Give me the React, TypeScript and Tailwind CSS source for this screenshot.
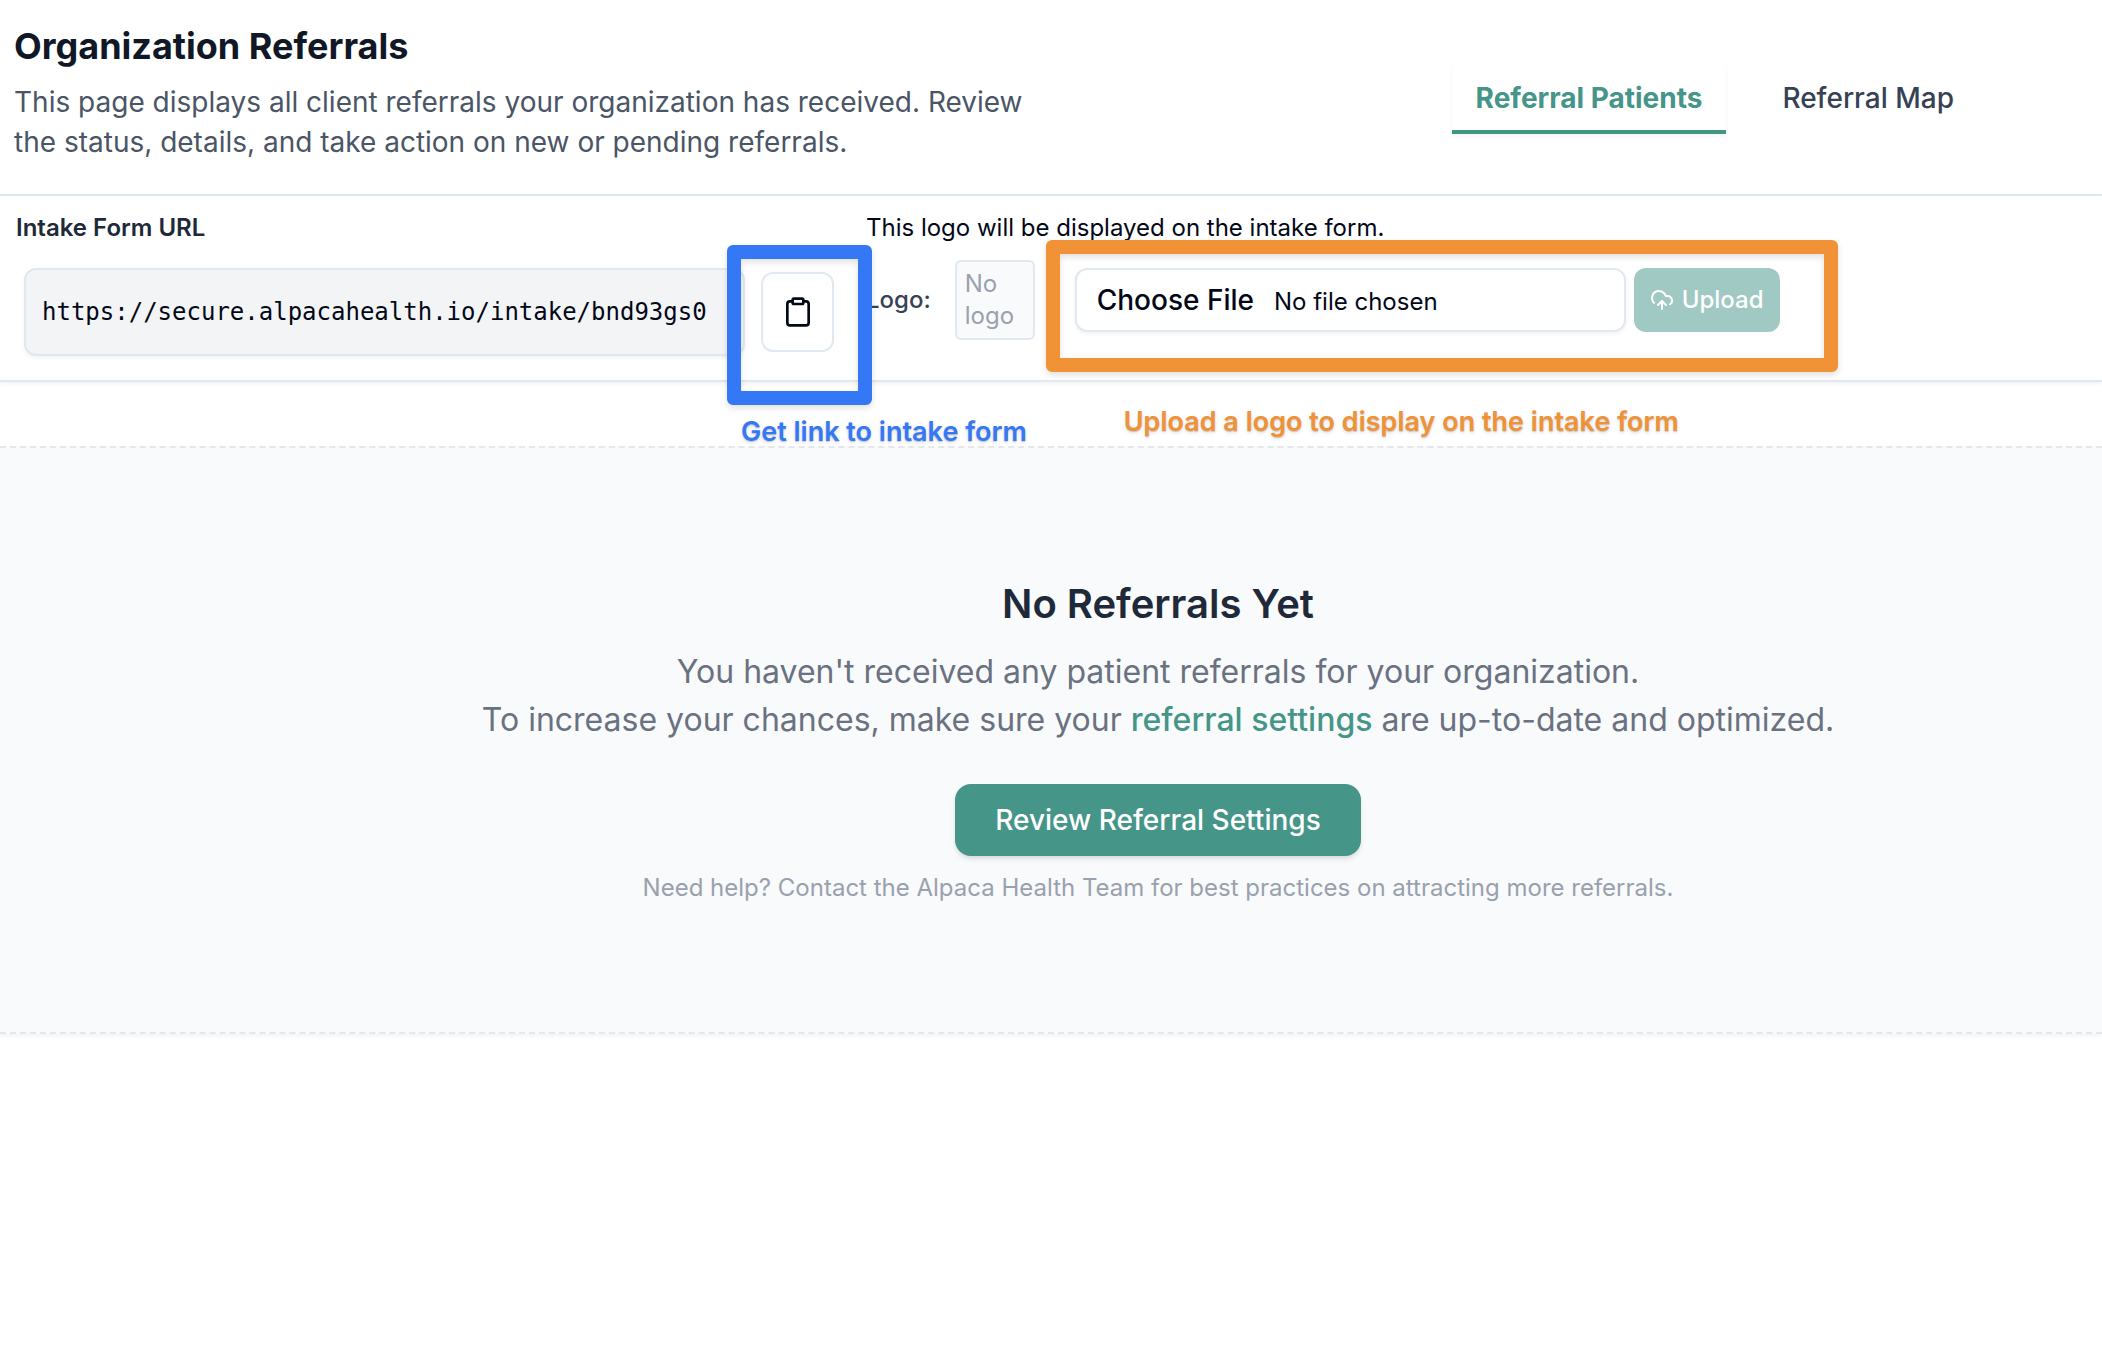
import React, { useState } from "react";
import { Clipboard, CloudUpload } from "lucide-react";

const tabs = [
  { id: "patients", label: "Referral Patients" },
  { id: "map", label: "Referral Map" },
];

function PageHeader() {
  const [active, setActive] = useState("patients");

  return (
    <header className="flex items-start justify-between border-b-2 border-slate-200 pt-[18px] pb-8 pl-[14px] pr-[124px]">
      <div className="max-w-[1030px]">
        <h1 className="text-[36px] leading-[56px] font-bold text-gray-900">
          Organization Referrals
        </h1>
        <p className="mt-2 text-[28px] leading-[40px] text-gray-600">
          This page displays all client referrals your organization has
          received. Review the status, details, and take action on new or
          pending referrals.
        </p>
      </div>
      <nav className="mt-11 flex gap-8">
        {tabs.map((tab) => (
          <button
            key={tab.id}
            onClick={() => setActive(tab.id)}
            className={`h-[72px] rounded-t-lg border-b-4 px-6 pt-1 text-[28px] leading-[40px] ${active === tab.id ? "border-[#419685] font-bold text-[#459588] shadow-[0_2px_4px_rgba(0,0,0,0.05)]" : "border-transparent font-medium text-gray-700"}`}
          >
            {tab.label}
          </button>
        ))}
      </nav>
    </header>
  );
}

function IntakeForm() {
  return (
    <section className="flex gap-8 border-b-2 border-slate-200 pt-4 pb-6 shadow-[0_2px_4px_rgba(0,0,0,0.05)]">
      <div>
        <label
          htmlFor="intake-url"
          className="block pl-4 text-2xl font-semibold text-gray-800"
        >
          Intake Form URL
        </label>
        <div className="mt-6 flex items-center gap-4 pl-6">
          <input
            id="intake-url"
            type="text"
            readOnly
            value="https://secure.alpacahealth.io/intake/bnd93gs0"
            className="h-[88px] w-[721px] rounded-xl border-2 border-slate-200 bg-gray-100 px-4 font-['DejaVu_Sans_Mono',monospace] text-2xl text-[#020817] shadow-[0_2px_4px_rgba(0,0,0,0.05)]"
          />
          <div className="relative">
            <button
              aria-label="Copy intake form link"
              className="flex h-20 w-[73px] items-center justify-center rounded-xl border-2 border-slate-200 bg-white text-[#020817]"
            >
              <Clipboard size={32} />
            </button>
            <div className="pointer-events-none absolute -top-[27px] -left-[34px] z-10 h-[160px] w-[145px] rounded-md border-14 border-[#3478f6] drop-shadow-md" />
            <p className="absolute top-36 -left-5 z-10 text-[27px] leading-[32px] font-semibold whitespace-nowrap text-[#3478f6] text-shadow-md">
              Get link to intake form
            </p>
          </div>
        </div>
      </div>
      <div className="text-2xl">
        <p className="text-[#020817]">
          This logo will be displayed on the intake form.
        </p>
        <div className="mt-4 flex items-center">
          <label htmlFor="logo-file" className="font-medium text-gray-700">
            Logo:
          </label>
          <div className="ml-6 flex size-20 items-center rounded-md border-2 border-slate-200 bg-gray-50 px-2 text-gray-400">
            No logo
          </div>
          <div className="relative ml-10 flex gap-2">
            <input
              id="logo-file"
              type="file"
              className="h-16 w-[551px] rounded-xl border-2 border-slate-200 bg-white px-5 pt-[10px] text-2xl text-[#020817] shadow-[0_2px_4px_rgba(0,0,0,0.05)] file:mr-5 file:text-[28px] file:leading-[40px] file:font-medium"
            />
            <button
              disabled
              className="flex h-16 items-center gap-2 rounded-xl bg-[#a1c9c4] px-4 font-medium text-white"
            >
              <CloudUpload size={24} />
              Upload
            </button>
            <div className="pointer-events-none absolute -top-7 -left-[29px] z-10 h-[132px] w-[792px] rounded-md border-14 border-[#f09235] drop-shadow-md" />
            <p className="absolute top-[138px] left-[49px] z-10 text-[27px] leading-[32px] font-semibold whitespace-nowrap text-[#f09235] text-shadow-md">
              Upload a logo to display on the intake form
            </p>
          </div>
        </div>
      </div>
    </section>
  );
}

function EmptyState() {
  return (
    <section className="mt-16 flex flex-col items-center border-y-2 border-dashed border-gray-200 bg-gray-50 py-32 pl-[214px] text-center shadow-[0_2px_4px_rgba(0,0,0,0.05)]">
      <h2 className="text-[40px] leading-[56px] font-semibold text-gray-800">
        No Referrals Yet
      </h2>
      <p className="mt-4 text-[32px] leading-[48px] text-gray-500">
        You haven't received any patient referrals for your organization.
        <br />
        To increase your chances, make sure your{" "}
        <a href="#settings" className="font-medium text-[#459588]">
          referral settings
        </a>{" "}
        are up-to-date and optimized.
      </p>
      <button className="mt-10 h-[72px] rounded-2xl bg-[#459588] px-10 text-[28px] leading-[40px] font-medium text-white shadow-md">
        Review Referral Settings
      </button>
      <p className="mt-4 text-2xl text-gray-400">
        Need help? Contact the Alpaca Health Team for best practices on
        attracting more referrals.
      </p>
    </section>
  );
}

export default function App() {
  return (
    <main className="min-h-screen overflow-x-hidden bg-white font-['Inter',sans-serif]">
      <PageHeader />
      <IntakeForm />
      <EmptyState />
    </main>
  );
}
